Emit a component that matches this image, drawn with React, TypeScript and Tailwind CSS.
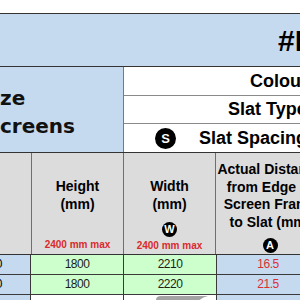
import React from 'react'

const Dot: React.FC<{ letter: string; size: string; text: string }> = ({ letter, size, text }) => (
  <span
    className={`${size} ${text} inline-flex items-center justify-center rounded-full bg-black text-white font-bold leading-none shrink-0`}
  >
    {letter}
  </span>
)

const HeaderCell: React.FC<{ lines: string[]; dot?: string; max?: boolean }> = ({ lines, dot, max }) => (
  <div className="w-[92px] shrink-0 border-r border-[#6f6f6f] flex flex-col items-center pt-[24px] pb-[3px]">
    <div className="text-[14px] font-bold leading-[18px] text-center text-black">
      {lines.map((l) => (
        <div key={l}>{l}</div>
      ))}
    </div>
    {dot && (
      <div className="mt-[3px]">
        <Dot letter="W" size="w-[15px] h-[15px]" text="text-[11px]" />
      </div>
    )}
    {max && (
      <div className="mt-auto text-[10px] font-bold leading-[12px] text-[#d92b2b] whitespace-nowrap">
        2400 mm max
      </div>
    )}
  </div>
)

const DataRow: React.FC<{ h: string; w: string; a: string }> = ({ h, w, a }) => (
  <div className="flex h-[20px] border-b border-[#3a3a3a] text-[12px] tracking-[-0.5px] leading-[19px]">
    <div className="w-[31px] shrink-0 bg-[#c6daef] border-r border-[#3a3a3a] flex justify-end pr-[28px] whitespace-nowrap">
      1200
    </div>
    <div className="w-[93px] shrink-0 bg-[#ccffcc] border-r border-[#3a3a3a] text-center text-[#1c1c1c]">{h}</div>
    <div className="w-[93px] shrink-0 bg-[#ccffcc] border-r border-[#3a3a3a] text-center text-[#1c1c1c]">{w}</div>
    <div className="w-[102px] shrink-0 bg-[#c6daef] text-center text-[#dc2f2f]">{a}</div>
  </div>
)

export default function App() {
  return (
    <div className="w-[300px] h-[300px] overflow-hidden bg-white font-['Liberation_Sans',Arial,sans-serif] text-black">
      <div className="w-[420px]">
        <div className="h-[13px]" />

        <div className="h-[54px] bg-[#c6daef] border-y border-[#333] flex items-center pl-[278px]">
          <span className="text-[30px] font-bold whitespace-nowrap">#NAME?</span>
        </div>

        <div className="flex h-[86px] border-b border-[#333]">
          <div className="w-[124px] shrink-0 bg-[#c6daef] border-r border-[#7a7a7a] pt-[17px] font-['DejaVu_Sans',Verdana,sans-serif] font-bold text-[20px] leading-[28px] text-[#111]">
            <div>ze</div>
            <div>creens</div>
          </div>
          <div className="flex-1 flex flex-col text-[18px] font-bold whitespace-nowrap">
            <div className="h-[29px] border-b border-[#8a8a8a] leading-[28px] pl-[126px]">Colour</div>
            <div className="h-[28px] border-b border-[#8a8a8a] leading-[27px] pl-[104px]">Slat Type</div>
            <div className="h-[28px] flex items-center pl-[31px]">
              <Dot letter="S" size="w-[21px] h-[21px]" text="text-[13px]" />
              <span className="ml-[23px] leading-[28px]">Slat Spacing</span>
            </div>
          </div>
        </div>

        <div className="flex h-[102px] bg-[#dcdcdc] border-b border-[#333]">
          <div className="w-[32px] shrink-0 border-r border-[#6f6f6f]" />
          <HeaderCell lines={['Height', '(mm)']} max />
          <HeaderCell lines={['Width', '(mm)']} dot="W" max />
          <div className="w-[108px] shrink-0 flex flex-col items-center pt-[8px]">
            <div className="text-[14px] font-bold leading-[17.5px] text-center whitespace-nowrap">
              <div>Actual Distance</div>
              <div>from Edge of</div>
              <div>Screen Frame</div>
              <div>to Slat (mm)</div>
            </div>
            <div className="mt-[1px]">
              <Dot letter="A" size="w-[15px] h-[15px]" text="text-[11px]" />
            </div>
          </div>
        </div>

        <DataRow h="1800" w="2210" a="16.5" />
        <DataRow h="1800" w="2220" a="21.5" />

        <div className="flex h-[20px]">
          <div className="w-[31px] shrink-0 bg-[#c6daef] border-r border-[#3a3a3a]" />
          <div className="w-[93px] shrink-0 border-r border-[#3a3a3a]" />
          <div className="w-[93px] shrink-0 border-r border-[#3a3a3a] relative">
            <svg className="absolute left-[32px] top-[1px]" width="58" height="12" viewBox="0 0 58 12">
              <path d="M0 4 Q0 0 5 0 L56 0 L56 12 L0 12 Z" fill="#a3a3a3" />
              <path d="M38 12 Q42 2 52 0 L58 0 L58 12 Z" fill="#ffffff" />
            </svg>
          </div>
          <div className="w-[102px] shrink-0 bg-[#c6daef]" />
        </div>
      </div>
    </div>
  )
}
